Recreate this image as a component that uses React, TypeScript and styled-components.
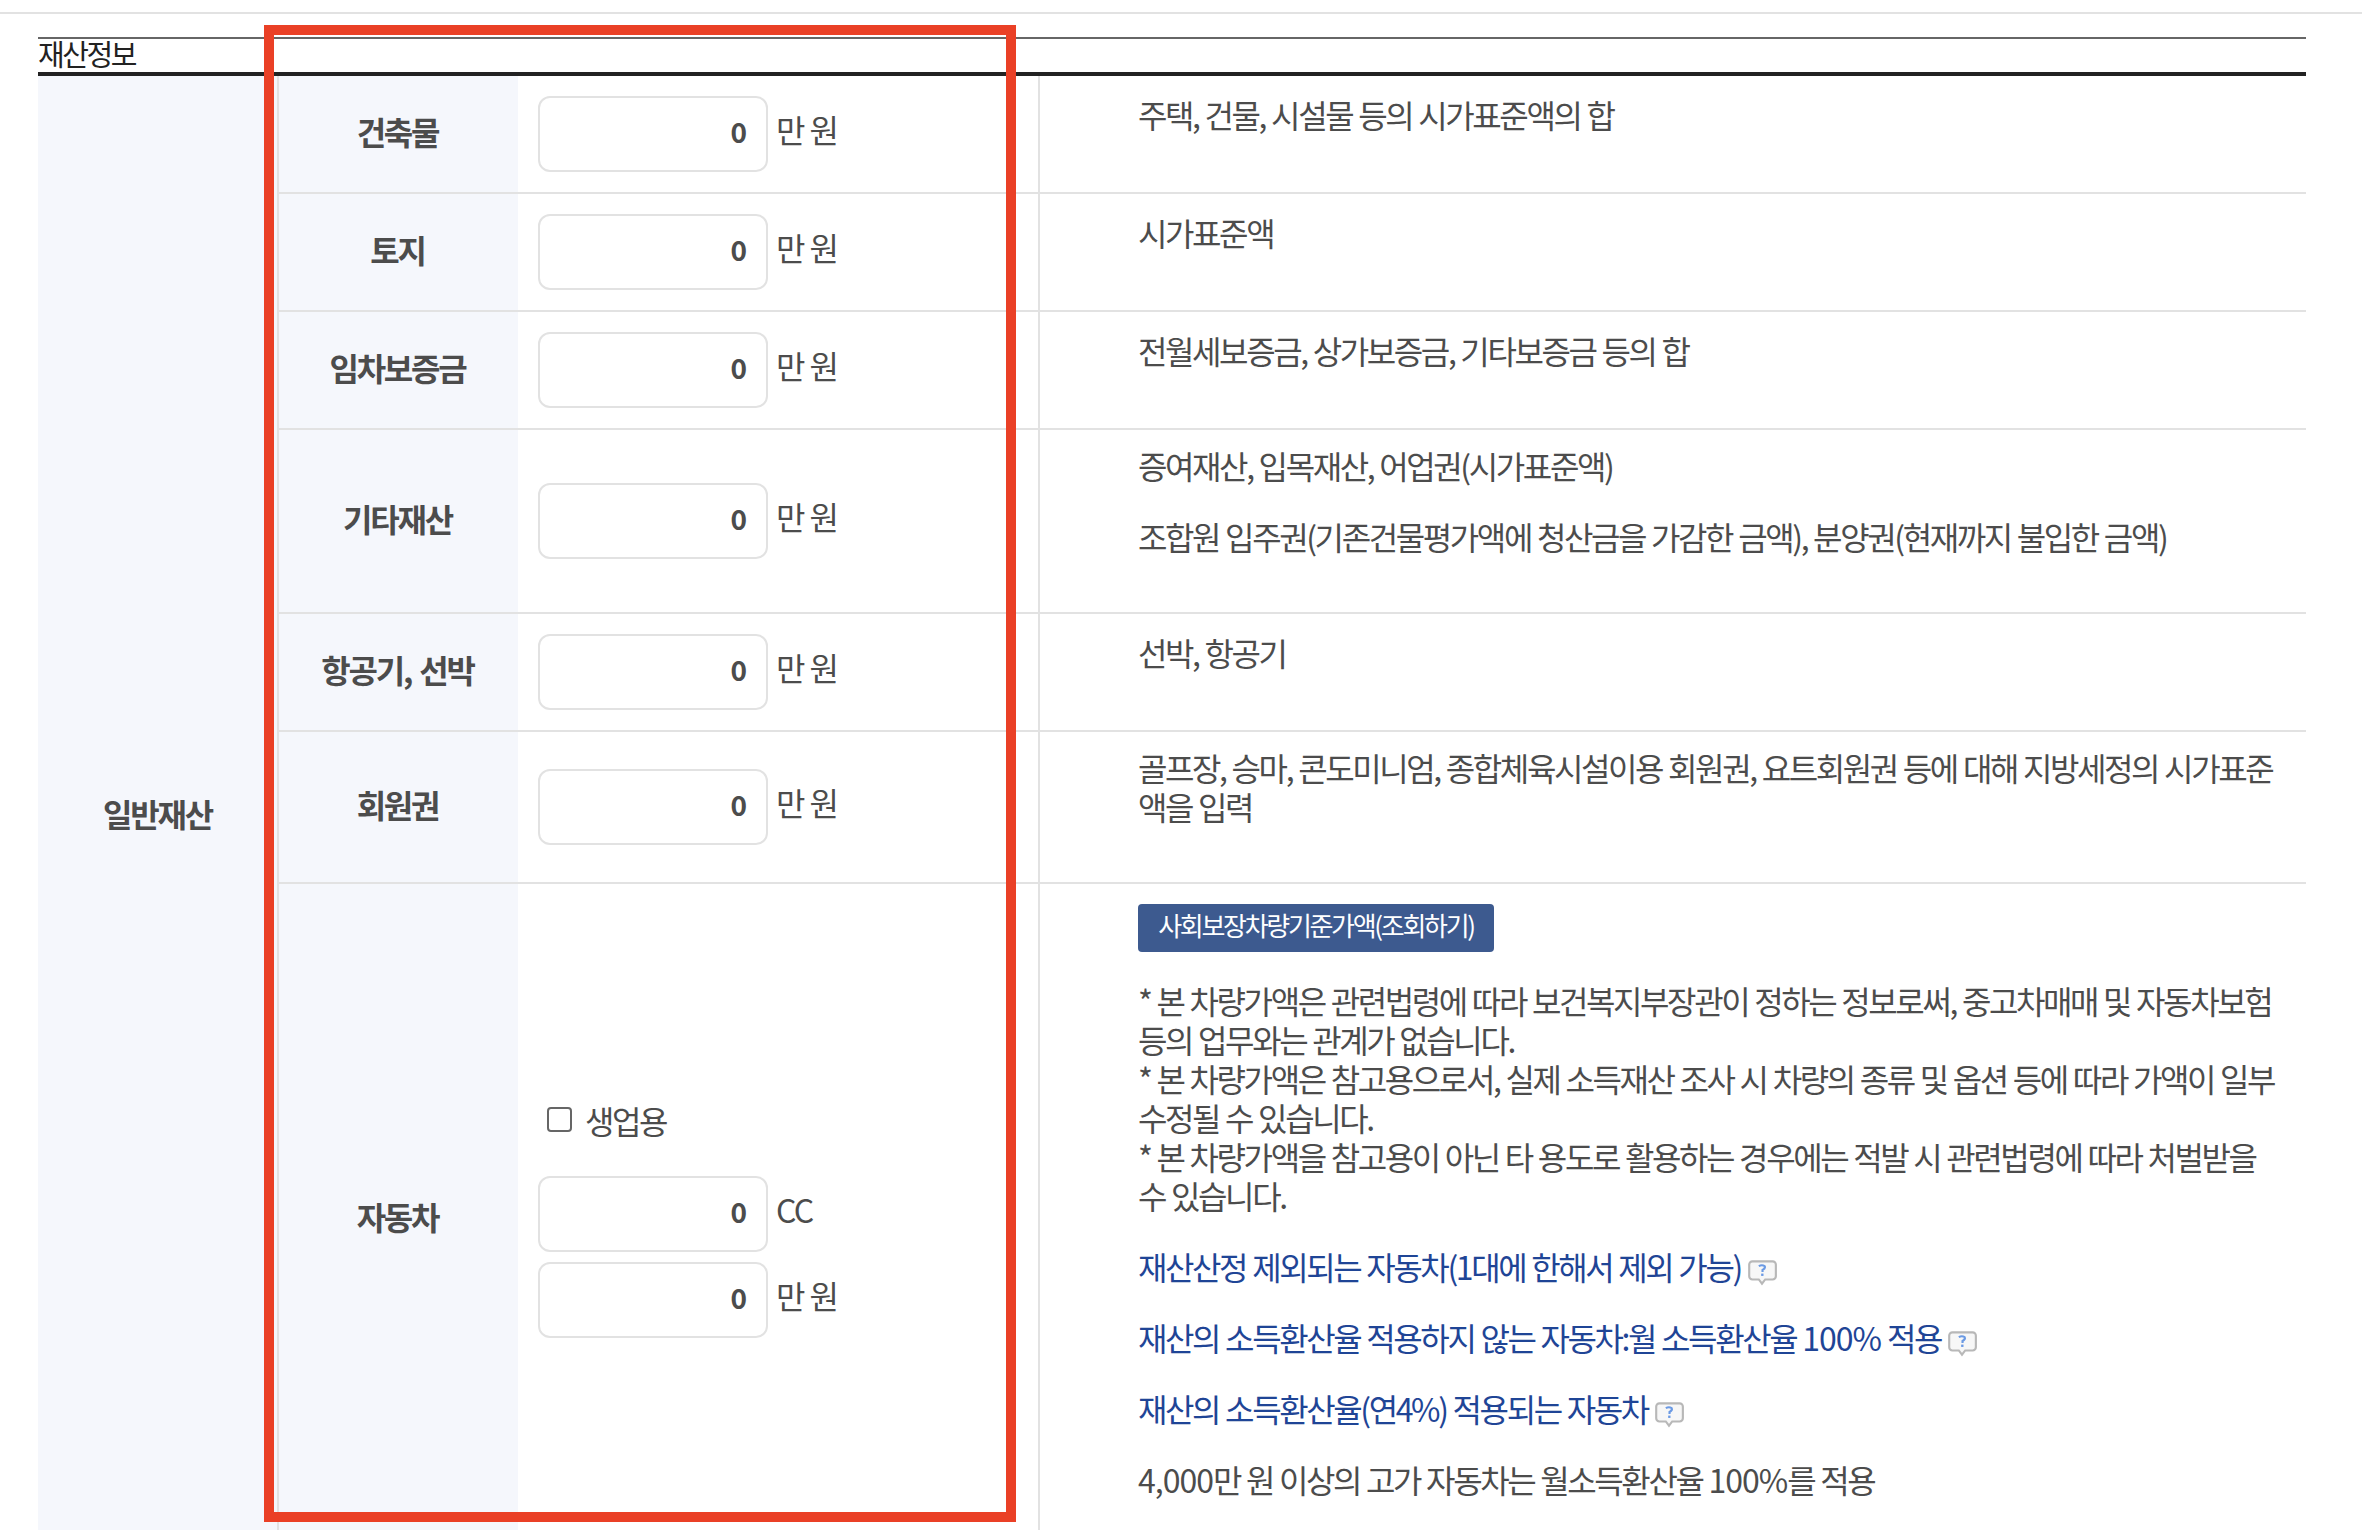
import styled, { createGlobalStyle } from 'styled-components';

const GlobalStyle = createGlobalStyle`
  html, body {
    margin: 0;
    height: 1530px;
    overflow: hidden;
    background: #fff;
  }
  body {
    font-family: "Noto Sans CJK KR", "Noto Sans", sans-serif;
    color: #4c4c4c;
  }
`;

const TopRule = styled.div`
  height: 2px;
  margin-top: 12px;
  background: #e2e2e2;
`;

const Section = styled.section`
  position: relative;
  padding: 23px 56px 0 38px;
`;

const Heading = styled.h2`
  height: 33px;
  margin: 0;
  border-top: 2px solid #666;
  font-size: 29px;
  font-weight: 400;
  line-height: 28px;
  letter-spacing: -2.4px;
  color: #222;
`;

const Table = styled.table`
  width: 100%;
  table-layout: fixed;
  border-collapse: separate;
  border-spacing: 0;
  border-top: 4px solid #222;
`;

const GroupCell = styled.th`
  background: #f5f7fc;
  font-size: 32px;
  font-weight: 700;
  letter-spacing: -2.2px;
  color: #4c4c4c;
  text-align: center;
  vertical-align: middle;
  border-right: 2px solid #e2e2e2;
  padding: 0;
`;

const LabelCell = styled.th<{ $lift?: number }>`
  background: #f5f7fc;
  font-size: 32px;
  font-weight: 700;
  letter-spacing: -2.2px;
  word-spacing: 3px;
  color: #4c4c4c;
  text-align: center;
  vertical-align: middle;
  border-bottom: 2px solid #e2e2e2;
  padding: 0 2px ${(p) => p.$lift ?? 6}px 0;
`;

const InputCell = styled.td<{ $shift?: number }>`
  box-sizing: border-box;
  vertical-align: middle;
  padding: ${(p) => p.$shift ?? 0}px 0 0 20px;
  border-bottom: 2px solid #e2e2e2;
  border-right: 2px solid #e2e2e2;
`;

const DescCell = styled.td<{ $height: number; $top: number }>`
  height: ${(p) => p.$height}px;
  box-sizing: border-box;
  vertical-align: top;
  padding: ${(p) => p.$top}px 24px 0 98px;
  border-bottom: 2px solid #e2e2e2;
  font-size: 32px;
  line-height: 39px;
  letter-spacing: -2.4px;
  word-spacing: 1.2px;
  color: #4c4c4c;
`;

const AmountRow = styled.div`
  display: flex;
  align-items: flex-start;
  & + & {
    margin-top: 10px;
  }
`;

const AmountInput = styled.input`
  box-sizing: border-box;
  width: 230px;
  height: 76px;
  padding: 0 19px 6px 0;
  border: 2px solid #e2e2e2;
  border-radius: 12px;
  background: #fff;
  text-align: right;
  font-family: inherit;
  font-size: 28px;
  font-weight: 700;
  color: #4c4c4c;
  outline: none;
`;

const Unit = styled.span`
  margin: 13px 0 0 8px;
  font-size: 32px;
  line-height: 40px;
  letter-spacing: -1.6px;
  color: #4c4c4c;
`;

const CheckRow = styled.label`
  display: flex;
  align-items: center;
  margin: 0 0 36px 9px;
  font-size: 32px;
  line-height: 40px;
  letter-spacing: -2.5px;
`;

const Check = styled.input`
  box-sizing: border-box;
  appearance: none;
  width: 25px;
  height: 25px;
  margin: 0 13px 0 0;
  border: 2px solid #666;
  border-radius: 4px;
  background: #fff;
`;

const LookupButton = styled.button`
  display: block;
  width: 356px;
  height: 48px;
  margin: 0 0 29px;
  padding: 0 0 6px;
  border: 0;
  border-radius: 4px;
  background: #3d5a8f;
  color: #fff;
  font-family: inherit;
  font-size: 26px;
  letter-spacing: -2.3px;
  line-height: 42px;
`;

const Note = styled.p`
  margin: 0 0 32px;
`;

const HelpLink = styled.a`
  display: block;
  margin: 0 0 32px;
  color: #1f4596;
  text-decoration: none;
`;

const Num = styled.span`
  letter-spacing: -1px;
`;

const HelpMark = styled.svg`
  width: 32px;
  height: 28px;
  margin-left: 5px;
  vertical-align: -6px;
`;

const Frame = styled.div`
  position: absolute;
  left: 264px;
  top: 11px;
  width: 752px;
  height: 1497px;
  box-sizing: border-box;
  border: 10px solid #ea4026;
  pointer-events: none;
`;

function Help() {
  return (
    <HelpMark viewBox="0 0 30 26">
      <path
        d="M6 3h19a3 3 0 0 1 3 3v11a3 3 0 0 1-3 3h-7l-3 4-3-4H6a3 3 0 0 1-3-3V6a3 3 0 0 1 3-3z"
        fill="#f7f7f7"
        stroke="#b8b8b8"
        strokeWidth="2"
      />
      <path d="M12 7.5q3-1.6 5.5 0q1 2-2 3.6v2" fill="none" stroke="#6b9ae4" strokeWidth="2" />
      <rect x="14.2" y="14.5" width="2.2" height="2.2" fill="#6b9ae4" />
    </HelpMark>
  );
}

function Amount({ unit = '만 원' }: { unit?: string }) {
  return (
    <AmountRow>
      <AmountInput defaultValue="0" />
      <Unit>{unit}</Unit>
    </AmountRow>
  );
}

const simpleRows = ['건축물', '토지', '임차보증금'];
const simpleDescs = ['주택, 건물, 시설물 등의 시가표준액의 합', '시가표준액', '전월세보증금, 상가보증금, 기타보증금 등의 합'];

export default function App() {
  return (
    <>
      <GlobalStyle />
      <TopRule />
      <Section>
        <Heading>재산정보</Heading>
        <Table>
          <colgroup>
            <col style={{ width: 241 }} />
            <col style={{ width: 239 }} />
            <col style={{ width: 522 }} />
            <col />
          </colgroup>
          <tbody>
            {simpleRows.map((label, i) => (
              <tr key={label}>
                {i === 0 && <GroupCell rowSpan={7}>일반재산</GroupCell>}
                <LabelCell>{label}</LabelCell>
                <InputCell>
                  <Amount />
                </InputCell>
                <DescCell $height={118} $top={19}>
                  {simpleDescs[i]}
                </DescCell>
              </tr>
            ))}
            <tr>
              <LabelCell>기타재산</LabelCell>
              <InputCell>
                <Amount />
              </InputCell>
              <DescCell $height={184} $top={16}>
                <Note as="div">증여재산, 입목재산, 어업권(시가표준액)</Note>
                조합원 입주권(기존건물평가액에 청산금을 가감한 금액), 분양권(현재까지 불입한 금액)
              </DescCell>
            </tr>
            <tr>
              <LabelCell>항공기, 선박</LabelCell>
              <InputCell>
                <Amount />
              </InputCell>
              <DescCell $height={118} $top={19}>
                선박, 항공기
              </DescCell>
            </tr>
            <tr>
              <LabelCell>회원권</LabelCell>
              <InputCell>
                <Amount />
              </InputCell>
              <DescCell $height={152} $top={16}>
                골프장, 승마, 콘도미니엄, 종합체육시설이용 회원권, 요트회원권 등에 대해 지방세정의 시가표준액을 입력
              </DescCell>
            </tr>
            <tr>
              <LabelCell $lift={0}>자동차</LabelCell>
              <InputCell $shift={6}>
                <CheckRow>
                  <Check type="checkbox" />
                  생업용
                </CheckRow>
                <Amount unit="CC" />
                <Amount />
              </InputCell>
              <DescCell $height={665} $top={20}>
                <LookupButton>사회보장차량기준가액(조회하기)</LookupButton>
                <Note>
                  * 본 차량가액은 관련법령에 따라 보건복지부장관이 정하는 정보로써, 중고차매매 및 자동차보험 등의 업무와는 관계가 없습니다.
                  <br />
                  * 본 차량가액은 참고용으로서, 실제 소득재산 조사 시 차량의 종류 및 옵션 등에 따라 가액이 일부 수정될 수 있습니다.
                  <br />
                  * 본 차량가액을 참고용이 아닌 타 용도로 활용하는 경우에는 적발 시 관련법령에 따라 처벌받을 수 있습니다.
                </Note>
                <HelpLink href="#">
                  재산산정 제외되는 자동차(1대에 한해서 제외 가능)
                  <Help />
                </HelpLink>
                <HelpLink href="#">
                  재산의 소득환산율 적용하지 않는 자동차:월 소득환산율 <Num>100%</Num> 적용
                  <Help />
                </HelpLink>
                <HelpLink href="#">
                  재산의 소득환산율(연4%) 적용되는 자동차
                  <Help />
                </HelpLink>
                <Num>4,000</Num>만 원 이상의 고가 자동차는 월소득환산율 <Num>100%</Num>를 적용
              </DescCell>
            </tr>
          </tbody>
        </Table>
        <Frame />
      </Section>
    </>
  );
}
